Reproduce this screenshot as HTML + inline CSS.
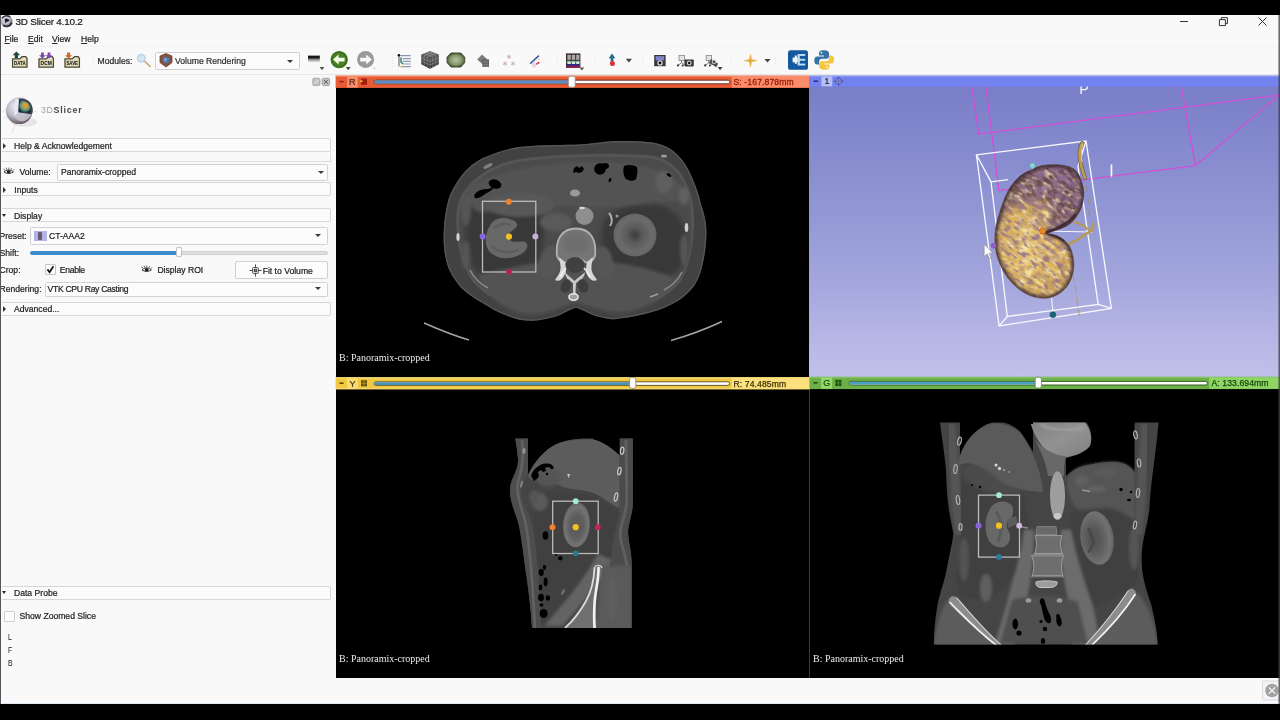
<!DOCTYPE html>
<html>
<head>
<meta charset="utf-8">
<title>3D Slicer 4.10.2</title>
<style>
*{box-sizing:border-box;margin:0;padding:0}
html,body{width:1280px;height:720px;overflow:hidden;background:#000}
body{font-family:"Liberation Sans",sans-serif;font-size:8.6px;color:#222;position:relative}
.abs{position:absolute}
.t{position:absolute;white-space:nowrap;line-height:10px;color:#161616;font-size:8.6px;filter:blur(.3px);-webkit-text-stroke:.22px #2a2a2a}
#win{position:absolute;left:0;top:14.5px;width:1280px;height:689px;background:#f9f9fa}
#edge{position:absolute;left:0;top:15px;width:1.400px;height:688.500px;background:#55565c}
.grp{position:absolute;left:2px;width:329px;height:14.400px;border:1px solid #d6d6d8;border-left:none;border-radius:0 2px 2px 0;background:#fbfbfc}
.combo{position:absolute;border:1px solid #d2d2d4;background:#fcfcfd;border-radius:1.5px}
.arr{position:absolute;width:0;height:0;border-left:3px solid transparent;border-right:3px solid transparent;border-top:3.2px solid #3a3a3a}
.arr2{position:absolute;width:0;height:0;border-left:2.6px solid transparent;border-right:2.6px solid transparent;border-top:3px solid #444}
.tri-r{position:absolute;width:0;height:0;border-top:3px solid transparent;border-bottom:3px solid transparent;border-left:3.4px solid #333;filter:blur(.3px)}
.tri-d{position:absolute;width:0;height:0;border-left:2.7px solid transparent;border-right:2.7px solid transparent;border-top:3.8px solid #262626;filter:blur(.3px)}
.view{position:absolute;background:#000;overflow:hidden}
.lbl{position:absolute;font-family:"Liberation Serif",serif;font-size:10px;color:#ececec;white-space:nowrap;line-height:11px;filter:blur(.3px)}
.sep{position:absolute;top:53px;width:3px;height:15px;background-image:radial-gradient(circle,#e2e2e6 .6px,transparent .8px);background-size:3px 3px}
svg{position:absolute;overflow:visible}
</style>
</head>
<body>
<div id="win"></div>
<div id="edge"></div>
<div class="combo" style="left:155px;top:51.500px;width:144.500px;height:18px;border-color:#cfcfd2"></div>
<!-- title bar -->
<div class="t" style="left:15.500px;top:15.200px;font-size:9.900px;line-height:13px;color:#111;letter-spacing:-.2px">3D Slicer 4.10.2</div>
<!-- window buttons -->
<svg style="left:0;top:0" width="1280" height="720" viewBox="0 0 1280 720">
  <defs>
    <filter id="b3" x="-20%" y="-20%" width="140%" height="140%"><feGaussianBlur stdDeviation="0.35"/></filter>
    <filter id="b5" x="-20%" y="-20%" width="140%" height="140%"><feGaussianBlur stdDeviation="0.5"/></filter>
    <radialGradient id="gLogo" cx="40%" cy="35%" r="75%"><stop offset="0" stop-color="#f4f4f8"/><stop offset=".5" stop-color="#b8b8ca"/><stop offset=".85" stop-color="#6e5e66"/><stop offset="1" stop-color="#3e3238"/></radialGradient>
    <radialGradient id="gCore" cx="55%" cy="40%" r="60%"><stop offset="0" stop-color="#f0a018"/><stop offset=".4" stop-color="#b0a050"/><stop offset=".7" stop-color="#4a8a80"/><stop offset="1" stop-color="#10202a"/></radialGradient>
    <radialGradient id="gGreen" cx="50%" cy="50%" r="55%"><stop offset="0" stop-color="#b4c29a"/><stop offset=".6" stop-color="#8a9a70"/><stop offset="1" stop-color="#3c4a2a"/></radialGradient>
    <linearGradient id="gCube" x1="0" y1="0" x2="0" y2="1"><stop offset="0" stop-color="#6e6e6e"/><stop offset="1" stop-color="#2c2c2e"/></linearGradient>
    <linearGradient id="gHist" x1="0" y1="0" x2="0" y2="1"><stop offset="0" stop-color="#151515"/><stop offset=".38" stop-color="#1c1c1c"/><stop offset=".5" stop-color="#777"/><stop offset="1" stop-color="#ededed"/></linearGradient>
  </defs>
  <!-- window controls -->
  <g stroke="#333" stroke-width="1" fill="none">
    <path d="M1180 21.5h8"/>
    <path d="M1219.400 19.600h6v6h-6z M1221.400 19.600v-2h6v6h-2"/>
    <path d="M1258.5 17.5l8 8 M1266.5 17.5l-8 8"/>
  </g>
  <!-- app icon in title -->
  <g filter="url(#b5)">
    <circle cx="6.700" cy="21.400" r="5.800" fill="url(#gLogo)"/>
    <path d="M4.600 18.800C6.400 18 8.600 18.800 9.600 20.600L5 23Z" fill="#1c1c22"/>
    <path d="M2 18.400C3.400 15.800 7 14.800 10.200 16.800" stroke="#2c2c34" stroke-width="1.500" fill="none"/>
    <path d="M3.200 25.200C6 27.400 10.400 26.400 11.800 22.600" stroke="#34303a" stroke-width="1.900" fill="none"/>
  </g>

  <!-- DATA / DCM / SAVE icons -->
  <g filter="url(#b3)">
    <g id="fold">
      <path d="M12.6 58.8h7.2l2.6-2.2h3.4l1.2 1.8v8.8h-14.4z" fill="#e6e0c2" stroke="#4a4632" stroke-width="1.3" stroke-linejoin="round"/>
      <rect x="13.6" y="60" width="12.4" height="5.6" fill="#d8d2ae"/>
    </g>
    <text x="14" y="65.4" font-size="5.6" font-weight="bold" fill="#111" font-family="Liberation Sans" textLength="11.6" lengthAdjust="spacingAndGlyphs">DATA</text>
    <path d="M16.4 51.6l3.8 3.6h-2.2v3h-3.2v-3h-2.2z" fill="#1e4a3c"/>
    <use href="#fold" x="26.4"/>
    <text x="40.6" y="65.4" font-size="5.6" font-weight="bold" fill="#111" font-family="Liberation Sans" textLength="11.2" lengthAdjust="spacingAndGlyphs">DCM</text>
    <path d="M42.4 58.6l-3.4-3.4h2v-2.6h2.8v2.6h2z M49 58.6l-3.4-3.4h2v-2.6h2.8v2.6h2z" fill="#7a4ab0"/>
    <use href="#fold" x="52.4"/>
    <text x="66.4" y="65.4" font-size="5.6" font-weight="bold" fill="#111" font-family="Liberation Sans" textLength="11.6" lengthAdjust="spacingAndGlyphs">SAVE</text>
    <path d="M68.6 58.6l-3.6-3.4h2.1v-2.8h3v2.8h2.1z" fill="#d8642a"/>
  </g>

  <!-- magnifier -->
  <g filter="url(#b3)">
    <path d="M144.2 60.8l6 5.6" stroke="#c8b080" stroke-width="1.8" stroke-linecap="round"/>
    <circle cx="141.3" cy="58.3" r="3.9" fill="#d4e6f4" stroke="#a8c4dc" stroke-width="1"/>
  </g>
  <!-- volume rendering icon -->
  <g filter="url(#b3)">
    <path d="M166 53.6l6 2.4v6.6l-6 4.4l-6-4.4v-6.6z" fill="#86503c" stroke="#6e4030" stroke-width=".8"/>
    <circle cx="166" cy="60" r="3.300" fill="#4a7aae"/>
    <circle cx="165.400" cy="59.400" r="1.500" fill="#7aa8d4"/>
  </g>

  <!-- history icon -->
  <rect x="308" y="55.6" width="11.8" height="6.6" fill="url(#gHist)" filter="url(#b3)"/>
  <path d="M319.6 67h4.8l-2.4 3.2z" fill="#555" filter="url(#b3)"/>
  <!-- back / forward -->
  <g filter="url(#b3)">
    <circle cx="339.2" cy="59.6" r="8.7" fill="#4c8028"/>
    <circle cx="339.2" cy="59.6" r="7.4" fill="none" stroke="#3a6a1c" stroke-width="1.2"/>
    <path d="M333 59.6l5.6-5v3.2h6v3.6h-6v3.2z" fill="#f4ffe8"/>
    <path d="M345.8 67h4.8l-2.4 3.2z" fill="#444"/>
    <circle cx="365.6" cy="59.6" r="8.5" fill="#9a9a9a"/>
    <path d="M371.8 59.6l-5.6-5v3.2h-6v3.6h6v3.2z" fill="#fafafa"/>
    <path d="M372.600 67.600h3.600l-1.800 2.200z" fill="#d4d4d4"/>
  </g>

  <!-- hierarchy icon -->
  <g filter="url(#b3)">
    <g stroke="#8a9ab0" stroke-width="1.1"><path d="M400.4 55.6h10.4 M402.6 58.6h8.2 M402.6 61.4h8.2 M404.2 64h6.6 M400.4 66.6h10.4"/></g>
    <path d="M399 56v10.4" stroke="#555" stroke-width="1"/>
    <path d="M401 57.4v4.8l2.4 2" stroke="#2a7a6a" stroke-width="1.4" fill="none"/>
    <circle cx="398.9" cy="55.2" r="1.3" fill="#111"/>
    <path d="M400 66.4h3" stroke="#e0c060" stroke-width="1"/>
  </g>
  <!-- cube -->
  <g filter="url(#b3)">
    <path d="M430 50.9l8.8 3.6v9.8l-8.8 4.5l-8.8-4.5v-9.8z" fill="url(#gCube)"/>
    <g stroke="#a8a8a8" stroke-width=".6" opacity=".8" fill="none">
      <path d="M424.2 53.4l8.8 3.7 M427.2 52.1l8.8 3.7 M432.8 52.1l-8.7 3.7 M435.8 53.4l-8.7 3.7"/>
      <path d="M421.2 57.8l8.8 3.9l8.8-3.9 M421.2 61l8.8 4l8.8-4 M424.2 56v9.6 M427.2 57.2v9.8 M432.8 57.2v9.8 M435.8 56v9.6 M430 58.4v10"/>
    </g>
  </g>
  <!-- green model blob -->
  <g filter="url(#b3)">
    <path d="M451 53h9.8l3.9 4.2v5.4l-3.9 4.4h-9.8l-3.9-4.4v-5.4z" fill="url(#gGreen)" stroke="#3e4a2c" stroke-width="1"/>
  </g>
  <!-- transforms -->
  <g filter="url(#b3)">
    <path d="M482 54.6l5.4 4.8l-4.6 5l-5.6-4.8z" fill="#7a7a7a"/>
    <rect x="482.4" y="59.4" width="6.6" height="7.4" fill="#5a5a5c"/>
    <path d="M484.6 59.6v7 M486.8 59.6v7 M482.6 62h6.2 M482.6 64.4h6.2" stroke="#999" stroke-width=".5"/>
  </g>
  <!-- fiducials (faint) -->
  <g stroke="#c4aaa2" stroke-width=".8" filter="url(#b3)" fill="none">
    <g id="ast"><path d="M509 54.600v4.400 M507 55.700l4 2.200 M511 55.700l-4 2.200"/></g>
    <use href="#ast" x="-4" y="6.800"/><use href="#ast" x="4" y="6.800"/>
  </g>
  <!-- ruler -->
  <g filter="url(#b3)">
    <path d="M530.4 63.8l8.6-8" stroke="#c8d0f0" stroke-width="2.6"/>
    <path d="M530.2 63.6l8.6-8" stroke="#2a3a8a" stroke-width="1.1"/>
    <circle cx="534" cy="65.4" r="1.5" fill="none" stroke="#e0a0b0" stroke-width=".8"/>
    <circle cx="538.4" cy="62.8" r="1.1" fill="#d03060"/>
    <circle cx="536.8" cy="63.8" r=".9" fill="#a030a0"/>
    <circle cx="539" cy="59.4" r=".8" fill="#e8d060"/>
  </g>
  <!-- layout grid -->
  <g filter="url(#b3)">
    <rect x="566" y="53.4" width="14.4" height="14.4" fill="#3a2a2a"/>
    <rect x="567.4" y="54.8" width="3.4" height="5" fill="#b0a8a8"/><rect x="571.8" y="54.8" width="3.4" height="5" fill="#b0a8a8"/><rect x="576.2" y="54.8" width="3.2" height="5" fill="#b0a8a8"/>
    <rect x="566.6" y="60.6" width="13.2" height="2.4" fill="#2a8a5a"/>
    <rect x="567.4" y="61.4" width="3.4" height="5.4" fill="#d8e8e0"/><rect x="571.8" y="61.4" width="3.4" height="5.4" fill="#d8e8e0"/><rect x="576.2" y="61.4" width="3.2" height="5.4" fill="#d8e8e0"/>
    <rect x="566.6" y="64" width="13.2" height="3.2" fill="#2a2a90"/>
    <rect x="566.6" y="65.8" width="13.2" height="1.6" fill="#a01838"/>
    <path d="M579.6 67.4h4.6l-2.3 3z" fill="#4a5a4a"/>
  </g>
  <!-- mouse mode arrow -->
  <g filter="url(#b3)">
    <path d="M612 53.6l3.4 4.6h-2v3.2h-2.8v-3.2h-2z" fill="#2a6a8c"/>
    <circle cx="612.4" cy="63.4" r="2.5" fill="#d83040"/>
    <path d="M625.8 58.8h6.2l-3.1 3.6z" fill="#444"/>
  </g>
  <!-- screenshot -->
  <g filter="url(#b3)">
    <rect x="654.2" y="55" width="11.4" height="11.2" fill="#34343c"/>
    <rect x="655.6" y="56.2" width="8.6" height="4.2" fill="#8084d0"/>
    <circle cx="660" cy="63" r="2.7" fill="#d8d8d8"/><circle cx="660" cy="63" r="1.4" fill="#111"/>
  </g>
  <!-- scene views -->
  <g filter="url(#b3)">
    <g id="sv">
      <rect x="679" y="55.4" width="5.4" height="5.2" fill="#e4e4e8" stroke="#888" stroke-width=".8"/>
      <path d="M681.6 60.6v2l-3 2.4 M681.6 62.6l3 2.4" stroke="#555" stroke-width=".8" fill="none"/>
      <circle cx="678" cy="65.4" r="1.1" fill="#333"/><circle cx="682.6" cy="65.4" r="1" fill="#333"/>
    </g>
    <rect x="684.4" y="59.4" width="9.4" height="7" rx=".8" fill="#3a3a3e"/>
    <circle cx="689.2" cy="63" r="2.4" fill="#d0d0d0"/><circle cx="689.2" cy="63" r="1.2" fill="#111"/>
    <use href="#sv" x="27.2"/>
    <path d="M711 59l7 4.4l-1.6 3.8l-7.4-4.4z" fill="#4a4a4e"/>
    <circle cx="714" cy="61.8" r="2.3" fill="#c8c8c8"/><circle cx="714" cy="61.8" r="1.1" fill="#222"/>
    <path d="M717.6 67h5l-2.5 3.2z" fill="#444"/>
  </g>
  <!-- crosshair -->
  <g filter="url(#b3)">
    <path d="M750.5 54.2l1.1 5.3l5.4 1.1l-5.4 1.1l-1.1 5.3l-1.1-5.3l-5.4-1.1l5.4-1.1z" fill="#e0a838" stroke="#e8b850" stroke-width=".6"/>
    <path d="M764.4 59h6.2l-3.1 3.4z" fill="#444"/>
  </g>
  <!-- extension manager -->
  <g filter="url(#b3)">
    <rect x="788" y="50.2" width="20" height="19.6" rx="2.6" fill="#14589e"/>
    <g fill="#bfe0f6"><rect x="799.4" y="54" width="5.8" height="1.9"/><rect x="798.4" y="58.8" width="6.8" height="1.9"/><rect x="799.4" y="63.6" width="5.8" height="1.9"/><rect x="797.6" y="54" width="2.2" height="11.5"/></g>
    <path d="M792.6 57.6h2.2v-2.2h2v2.2h1v4.6h-1v1.6h-2v-1.6h-2.2z" fill="#f2f6fa"/>
  </g>
  <!-- python -->
  <g filter="url(#b3)">
    <path d="M823.6 50.2c-4.4 0-4.6 2-4.6 3v2.4h5v.9h-6.8c-2 0-2.9 1.6-2.9 4s.9 4.1 2.9 4.100h1.900v-2.700c0-1.900 1.400-3.100 3.100-3.100h4.400c1.500 0 2.500-1 2.500-2.500v-3.100c0-1.500-1.400-3-5.500-3z" fill="#3872a4"/>
    <path d="M824.800 69.800c4.400 0 4.600-2 4.600-3v-2.400h-5v-.9h6.800c2 0 2.900-1.600 2.900-4s-.9-4.100-2.900-4.100h-1.900v2.700c0 1.900-1.400 3.100-3.100 3.100h-4.400c-1.500 0-2.500 1-2.500 2.500v3.100c0 1.500 1.400 3 5.500 3z" fill="#f6c63c"/>
    <circle cx="821.400" cy="52.700" r=".9" fill="#e8f0f8"/><circle cx="827" cy="67.300" r=".9" fill="#fff8e0"/>
  </g>

  <!-- dock buttons -->
  <g filter="url(#b3)">
    <rect x="312.800" y="78.200" width="7.200" height="7.400" rx="1.400" fill="#c4c4c6" stroke="#9c9c9e" stroke-width=".8"/>
    <path d="M314.600 83.800l3.600-3.800" stroke="#f4f4f4" stroke-width=".9"/>
    <rect x="322.200" y="78.200" width="7.400" height="7.400" rx="1.400" fill="#c0c0c2" stroke="#98989a" stroke-width=".8"/>
    <path d="M324 80l3.800 3.800 M327.800 80l-3.800 3.800" stroke="#5a5a5c" stroke-width="1"/>
  </g>

  <!-- 3DSlicer logo -->
  <g filter="url(#b5)">
    <path d="M2 112l21-15.500 M12 133l12-36 M3 118l34-7" stroke="#ddd6da" stroke-width=".8" opacity=".8"/>
    <ellipse cx="24" cy="122" rx="13" ry="5" fill="#000" opacity=".08"/>
    <circle cx="19.200" cy="110.800" r="13.300" fill="url(#gLogo)"/>
    <path d="M16 99.600c6-3 14.500 0 16.300 7.200c.8 3.400.2 6-.6 7.400l-13.400-1.600z" fill="#3a4450"/>
    <path d="M18.600 101.200c4.800-1.600 10.600.8 11.800 6.600c.5 2.400.2 4-.4 5.200l-11-1.400z" fill="url(#gCore)"/>
    <path d="M15.400 99.400c1.200-.8 3-.8 3.600 0l-1 13.400l-3.400 3.400c-.6-5-.4-12 .8-16.800z" fill="#e8e8ee"/>
    <path d="M14.600 116.200l3.400-3.400l13.600 1.800c-1.200 2.400-3.600 5-7.400 6.600c-4 .6-8-.8-9.600-5z" fill="#c8c6d0" opacity=".85"/>
  </g>
</svg>
<!-- menu -->
<div class="t" style="left:4.5px;top:33.5px"><u>F</u>ile</div>
<div class="t" style="left:28px;top:33.5px"><u>E</u>dit</div>
<div class="t" style="left:52px;top:33.5px"><u>V</u>iew</div>
<div class="t" style="left:81px;top:33.5px"><u>H</u>elp</div>
<div class="abs" style="left:0;top:45.500px;width:1280px;height:1px;background:#f2f2f4"></div>

<!-- toolbar -->
<div class="abs" style="left:0;top:73.500px;width:1280px;height:1.500px;background:#e6e6e9"></div>
<div class="sep" style="left:92px"></div>
<div class="sep" style="left:391px"></div>
<div class="sep" style="left:556px"></div>
<div class="sep" style="left:594px"></div>
<div class="sep" style="left:641px"></div>
<div class="sep" style="left:730px"></div>
<div class="sep" style="left:774px"></div>
<div class="t" style="left:97.500px;top:56px;color:#2a2a2a">Modules:</div>
<div class="t" style="left:175px;top:56px;color:#333">Volume Rendering</div>
<div class="arr" style="left:287px;top:59.500px"></div>

<!-- left panel -->
<div class="t" style="left:41px;top:104.800px;font-size:8.800px;letter-spacing:.6px;color:#a2a2a6;-webkit-text-stroke:0">3D<b style="color:#48484c;letter-spacing:.85px">Slicer</b></div>

<div class="grp" style="top:138px"></div>
<div class="tri-r" style="left:3px;top:142.800px"></div>
<div class="t" style="left:14px;top:141px">Help &amp; Acknowledgement</div>
<div class="abs" style="left:2px;top:160.500px;width:329px;height:1px;background:#dcdcde"></div>
<div class="abs" style="left:330px;top:153px;width:1px;height:8px;background:#dcdcde"></div>

<div class="t" style="left:19.500px;top:167px">Volume:</div>
<div class="combo" style="left:57px;top:164px;width:271px;height:17px"></div>
<div class="t" style="left:61px;top:167.200px">Panoramix-cropped</div>
<div class="arr" style="left:318px;top:170.500px"></div>

<div class="grp" style="top:182px"></div>
<div class="tri-r" style="left:3px;top:186.800px"></div>
<div class="t" style="left:14.300px;top:185.200px">Inputs</div>

<div class="grp" style="top:208px"></div>
<div class="tri-d" style="left:1.800px;top:214px"></div>
<div class="t" style="left:14px;top:211.200px">Display</div>

<div class="t" style="left:-.500px;top:231px">Preset:</div>
<div class="combo" style="left:29.500px;top:226.500px;width:298.500px;height:18px"></div>
<div class="abs" style="left:33.500px;top:230.500px;width:13px;height:10px;background:#b4b4e4"></div>
<div class="abs" style="left:38px;top:231.500px;width:4px;height:8.500px;background:#6a5a70;border-radius:1px;filter:blur(.4px)"></div>
<div class="t" style="left:49px;top:231px">CT-AAA2</div>
<div class="arr" style="left:315.400px;top:233.500px"></div>

<div class="t" style="left:-.500px;top:248px">Shift:</div>
<div class="abs" style="left:30px;top:250.500px;width:297.500px;height:4.600px;border-radius:2.300px;background:#dedee0;border:.6px solid #cfcfd2"></div>
<div class="abs" style="left:30px;top:250.500px;width:148px;height:4.600px;border-radius:2.300px;background:#3d8ccb"></div>
<div class="abs" style="left:175.800px;top:246.800px;width:6.400px;height:10.600px;border-radius:2px;background:#fdfdfd;border:.8px solid #c4c4c8;box-shadow:0 0 1px rgba(0,0,0,.15)"></div>

<div class="t" style="left:-.500px;top:265.200px">Crop:</div>
<div class="abs" style="left:44.500px;top:263.800px;width:11px;height:10.800px;background:#fdfdfd;border:.8px solid #c6c6ca;border-radius:1px"></div>
<svg style="left:44.500px;top:263.800px" width="11" height="11" viewBox="0 0 11 11"><path d="M2.400 5.400l2.200 2.800l3.800-6" stroke="#111" stroke-width="1.700" fill="none"/></svg>
<div class="t" style="left:59.800px;top:265.200px;letter-spacing:-.3px">Enable</div>
<div class="t" style="left:157.400px;top:265.200px">Display ROI</div>
<div class="combo" style="left:235px;top:261px;width:93px;height:17.500px;border-radius:2px;border-color:#d0d0d2"></div>
<div class="t" style="left:262.700px;top:265.600px">Fit to Volume</div>
<svg style="left:249px;top:263.500px" width="13" height="13" viewBox="0 0 13 13"><g stroke="#3a3a3a" stroke-width=".9" fill="none" filter="url(#b3)"><rect x="3.600" y="3.600" width="5.800" height="5.800" rx=".8"/><rect x="5.300" y="5.300" width="2.400" height="2.400" fill="#888"/><path d="M6.500 .4v3.200 M6.500 9.400v3.200 M.4 6.500h3.200 M9.400 6.500h3.200"/></g></svg>

<div class="t" style="left:-.500px;top:284.200px">Rendering:</div>
<div class="combo" style="left:44.500px;top:281.500px;width:283.500px;height:15.500px"></div>
<div class="t" style="left:47.500px;top:284.200px;letter-spacing:-.3px">VTK CPU Ray Casting</div>
<div class="arr" style="left:315.400px;top:287.200px"></div>

<div class="grp" style="top:301.500px"></div>
<div class="tri-r" style="left:3px;top:306.200px"></div>
<div class="t" style="left:14px;top:304.400px">Advanced...</div>

<!-- eye icons -->
<svg style="left:0;top:0" width="340" height="300" viewBox="0 0 340 300">
  <g id="eye" filter="url(#b3)">
    <path d="M4 172c1.600-2.600 7.600-2.800 9.400 0c-1.800 1.600-7.600 1.800-9.400 0z" fill="#fff" stroke="#222" stroke-width=".9"/>
    <circle cx="8.700" cy="171.800" r="1.900" fill="#222"/>
    <path d="M4.600 170.200l-.8-1.400 M6.600 169.400l-.4-1.600 M8.800 169.200v-1.600 M11 169.600l.6-1.400 M12.800 170.600l1-1.200" stroke="#222" stroke-width=".7"/>
  </g>
  <use href="#eye" x="138" y="98"/>
</svg>

<!-- data probe -->
<div class="grp" style="top:585.500px"></div>
<div class="tri-d" style="left:1.800px;top:590.600px"></div>
<div class="t" style="left:14px;top:588.400px">Data Probe</div>
<div class="abs" style="left:4px;top:610.500px;width:11px;height:11px;background:#fdfdfd;border:.8px solid #cdcdd0;border-radius:1px"></div>
<div class="t" style="left:19.500px;top:611.400px">Show Zoomed Slice</div>
<div class="t" style="left:8px;top:632.400px;font-size:8.800px;transform:scaleX(.78);transform-origin:0 0;-webkit-text-stroke:0">L</div>
<div class="t" style="left:8px;top:645px;font-size:8.800px;transform:scaleX(.78);transform-origin:0 0;-webkit-text-stroke:0">F</div>
<div class="t" style="left:8px;top:657.600px;font-size:8.800px;transform:scaleX(.78);transform-origin:0 0;-webkit-text-stroke:0">B</div>

<!-- status bar close -->
<svg style="left:0;top:0" width="1280" height="720" viewBox="0 0 1280 720">
  <rect x="1262.500" y="681" width="20" height="19" rx="1.500" fill="#f4f4f5" stroke="#d0d0d2" stroke-width=".8"/>
  <circle cx="1272" cy="690.500" r="6.800" fill="#a2a2a4"/>
  <path d="M1268.800 687.300l6.400 6.400 M1275.200 687.300l-6.400 6.400" stroke="#fff" stroke-width="1.100"/>
</svg>
<!-- ===== VIEWS ===== -->
<div class="view" style="left:335.600px;top:75.600px;width:473.400px;height:301px"></div>
<div class="view" style="left:335.600px;top:376.600px;width:474px;height:301.600px"></div>
<div class="view" style="left:809.600px;top:376.600px;width:471px;height:301.600px"></div>
<div class="view" style="left:809px;top:75.600px;width:471.600px;height:301px;background:linear-gradient(#787cc6 0%,#8488cd 22%,#9297d4 45%,#a5a8de 70%,#b4b5e4 85%,#c0c0ea 100%)"></div>
<div class="abs" style="left:809.200px;top:389px;width:1px;height:289px;background:#3a3a3a"></div>

<!-- slice bars -->
<svg style="left:0;top:0" width="1280" height="720" viewBox="0 0 1280 720">
  <g filter="url(#b3)">
  <!-- red -->
  <rect x="335.600" y="75.600" width="473.400" height="12.300" fill="#e85c34"/>
  <rect x="335.600" y="75.600" width="473.400" height="1.200" fill="#f4a080" opacity=".7"/>
  <rect x="347" y="76" width="10.800" height="11.600" fill="#f68e6c"/>
  <rect x="731.800" y="76" width="77.200" height="11.600" fill="#f98c6a"/>
  <path d="M339.400 81.600h4.200" stroke="#8a2410" stroke-width="1.500"/>
  <rect x="361" y="78.600" width="6" height="6.200" fill="#a41c0a"/><rect x="360.200" y="80.400" width="2.400" height="1.600" fill="#d8d030"/>
  <rect x="374" y="80.200" width="356" height="3.600" rx="1.800" fill="#fdfdfd" stroke="#5a2a1c" stroke-width=".9"/>
  <rect x="374.400" y="80.600" width="196" height="2.800" rx="1.400" fill="#5c8cc8"/>
  <rect x="568.400" y="76.200" width="6.800" height="11" rx="1.800" fill="#fdfdfd" stroke="#9a8a84" stroke-width=".8"/>
  <!-- 3D -->
  <rect x="809" y="75.600" width="471.600" height="11" fill="#7282ee"/>
  <rect x="809" y="75.600" width="471.600" height="1.600" fill="#8c98f0" opacity=".8"/>
  <rect x="821.400" y="76.400" width="10.900" height="10" fill="#b6bef6"/>
  <path d="M813.600 81.200h4.400" stroke="#2a2a78" stroke-width="1.500"/>
  <path d="M838.600 77.400l3.800 3.800l-3.800 3.800l-3.800-3.800z" fill="#8c98e0" stroke="#4a4a98" stroke-width=".9"/>
  <path d="M838.600 76.400v9.600 M833.800 81.200h9.600" stroke="#4a4a98" stroke-width=".6"/>
  <!-- yellow -->
  <rect x="335.600" y="377.200" width="474" height="12.100" fill="#f0c842"/>
  <rect x="335.600" y="377.200" width="474" height="1.400" fill="#f8e08a" opacity=".8"/>
  <rect x="335.600" y="387.800" width="474" height="1.500" fill="#f4d874" opacity=".8"/>
  <rect x="347" y="377.600" width="11" height="11.400" fill="#f8dc72"/>
  <rect x="731.800" y="377.600" width="77.800" height="11.400" fill="#fbe07c"/>
  <path d="M339.400 383.200h4.200" stroke="#5a4608" stroke-width="1.500"/>
  <rect x="361" y="380.200" width="6" height="6.200" fill="#6a5410"/><path d="M361 383.300h6 M364 380.200v6" stroke="#c8a838" stroke-width=".6"/>
  <rect x="374" y="381.800" width="355.600" height="3.600" rx="1.800" fill="#fdfdfd" stroke="#5a4c14" stroke-width=".9"/>
  <rect x="374.400" y="382.200" width="258" height="2.800" rx="1.400" fill="#4a92ba"/>
  <rect x="629.600" y="377.600" width="6.200" height="10.800" rx="1.800" fill="#fdfdfd" stroke="#8a8460" stroke-width=".8"/>
  <!-- green -->
  <rect x="809.900" y="376.800" width="470.500" height="12.300" fill="#6cb046"/>
  <rect x="809.900" y="376.800" width="470.500" height="1.400" fill="#8cc46c" opacity=".8"/>
  <rect x="821.200" y="377.400" width="10.900" height="11.400" fill="#92d96a"/>
  <rect x="1209.400" y="377.400" width="71" height="11.400" fill="#8ed566"/>
  <path d="M813.400 382.800h4.200" stroke="#1e4a10" stroke-width="1.500"/>
  <rect x="835.400" y="379.800" width="6" height="6.200" fill="#1e5010"/><path d="M835.400 382.900h6 M838.400 379.800v6" stroke="#6ab048" stroke-width=".6"/>
  <rect x="849" y="381.400" width="358.400" height="3.600" rx="1.800" fill="#fdfdfd" stroke="#2a5418" stroke-width=".9"/>
  <rect x="849.400" y="381.800" width="189" height="2.800" rx="1.400" fill="#48a0c2"/>
  <rect x="1035.200" y="377.200" width="6.200" height="10.800" rx="1.800" fill="#fdfdfd" stroke="#6a8460" stroke-width=".8"/>
  </g>
</svg>
<div class="t" style="left:349px;top:77.200px;color:#7a1e0c;font-size:9px">R</div>
<div class="t" style="left:733.500px;top:77.400px;color:#9c1c08;font-size:8.600px;letter-spacing:.12px;-webkit-text-stroke:.3px #9c1c08">S: -167.878mm</div>
<div class="t" style="left:824.400px;top:76.400px;color:#1c1c50;font-size:8.800px">1</div>
<div class="t" style="left:349.400px;top:378.600px;color:#4a3c08;font-size:9px">Y</div>
<div class="t" style="left:733.500px;top:378.800px;color:#3c3408;font-size:8.600px;letter-spacing:.1px;-webkit-text-stroke:.25px #3c3408">R: 74.485mm</div>
<div class="t" style="left:823.200px;top:378.200px;color:#1a5a0c;font-size:9px">G</div>
<div class="t" style="left:1211.500px;top:378.400px;color:#164a0c;font-size:8.600px;letter-spacing:.1px;-webkit-text-stroke:.25px #164a0c">A: 133.694mm</div>

<div class="lbl" style="left:339px;top:351.500px">B: Panoramix-cropped</div>
<div class="lbl" style="left:339px;top:653.300px">B: Panoramix-cropped</div>
<div class="lbl" style="left:813px;top:653.300px">B: Panoramix-cropped</div>
<!-- ===== AXIAL (red) CT ===== -->
<svg style="left:0;top:0" width="1280" height="720" viewBox="0 0 1280 720">
  <defs>
    <filter id="c1" x="-5%" y="-5%" width="110%" height="110%"><feGaussianBlur stdDeviation="0.7"/></filter>
    <filter id="c2" x="-10%" y="-10%" width="120%" height="120%"><feGaussianBlur stdDeviation="1.6"/></filter>
    <filter id="c3" x="-20%" y="-20%" width="140%" height="140%"><feGaussianBlur stdDeviation="3"/></filter>
    <clipPath id="clipR"><rect x="335.600" y="88" width="474" height="288.600"/></clipPath>
    <clipPath id="axBody"><path id="axP" d="M519 147C535 145.200 555 145 576 144.750C595 143.500 607 141 620 141C635 141 645 141.500 652.600 142.600C659 144 664 145.500 669 148C676 152.500 681 158 685.400 164.400C690 172 693.500 180 696.400 188.500C698.500 194 700 199 700.700 203.800C704 213 706.400 222 706.400 230.700C706.400 239 705.800 247 704.600 254.200C703.500 261 702 267 700.600 272.300C698.500 278 696.500 282.500 693.400 286.700C689 292.500 684 297 677.200 301.200C669 306 661 309.500 651.900 312C642 315 632 317 621.200 318.300C618 319 615 319.300 612 319.200C606 318.800 600 317.500 594 315.600C588 313 582 309.500 576 307.500C570 309.500 564 313 558.800 315.600C550 318.500 541 320.500 531.700 320.700C524 320.600 518 319.500 511.900 317.400C503 314.500 495 311 488.400 306.600C480 301.500 474 298 468.500 294C463 290 459 286 455.900 281C451 274.500 448.500 269 446.800 263C444.500 254 443.400 245 443.600 236C443.800 223 445.500 211 448.300 200C450.500 193 454 186.500 458.400 180C465 170 473 163 483 158C495 152.500 507 149 519 147Z"/></clipPath>
    <radialGradient id="kid" cx="50%" cy="50%" r="50%"><stop offset="0" stop-color="#3c3c3c"/><stop offset=".35" stop-color="#5a5a5a"/><stop offset=".8" stop-color="#6c6c6c"/><stop offset="1" stop-color="#646464"/></radialGradient>
  </defs>
  <g clip-path="url(#clipR)">
   <g filter="url(#c1)">
    <use href="#axP" fill="#434343"/>
    <g clip-path="url(#axBody)">
      <!-- outer rim lighter -->
      <use href="#axP" fill="none" stroke="#565656" stroke-width="2.400"/>
      <!-- muscle wall ring -->
      <path d="M512 162C540 156 610 153 652 157C676 161 688 182 692 208C694 236 690 262 680 280C666 298 642 307 620 305C600 303 590 297 577 296C562 297 552 305 532 306C512 307 488 297 474 281C462 264 456 238 458 212C460 188 486 168 512 162Z" fill="#4c4c4c" stroke="#545454" stroke-width="3"/>
      <g filter="url(#c3)" fill="#383838">
        <path d="M466 215C470 198 486 192 505 196C525 198 540 204 544 222C546 240 542 262 530 276C515 286 490 284 476 272C466 258 463 235 466 215Z"/>
        <path d="M604 222C612 206 640 200 664 206C684 214 690 236 686 256C680 276 660 288 640 286C620 284 606 268 602 250C600 240 600 230 604 222Z"/>
        <ellipse cx="575" cy="180" rx="60" ry="7"/>
      </g>
      <!-- posterior muscles -->
      <g filter="url(#c2)">
        <path d="M478 275C500 270 530 262 555 262L600 262C625 262 655 270 675 278C665 300 640 312 620 312C600 312 590 305 577 303C562 305 552 314 532 314C512 314 490 302 478 275Z" fill="#535353"/>
        <!-- psoas -->
        <ellipse cx="549" cy="262" rx="9" ry="16" fill="#575757" transform="rotate(12 549 262)"/>
        <ellipse cx="604" cy="262" rx="9" ry="16" fill="#575757" transform="rotate(-12 604 262)"/>
        <!-- anterior bowel / organs -->
        <path d="M470 185C500 170 560 160 610 162C650 164 680 175 686 195C680 205 660 200 640 204C610 210 590 206 560 206C530 206 500 214 478 212C468 205 466 195 470 185Z" fill="#525252"/>
        <ellipse cx="520" cy="205" rx="34" ry="12" fill="#595959"/>
        <ellipse cx="556" cy="222" rx="16" ry="9" fill="#5a5a5a"/>
        <ellipse cx="664" cy="182" rx="9" ry="11" fill="#5e5e5e"/>
        <ellipse cx="684" cy="196" rx="5" ry="9" fill="#606060"/>
        <ellipse cx="466" cy="210" rx="5" ry="16" fill="#545454"/>
        <ellipse cx="684" cy="250" rx="4" ry="16" fill="#545454"/>
        <ellipse cx="466" cy="255" rx="4" ry="14" fill="#545454"/>
      </g>
      <!-- kidneys -->
      <circle cx="635" cy="235" r="21.500" fill="url(#kid)"/>
      <path d="M490.200 225.300C493 220.500 498 218 502.800 218.100C508 218 513 219.500 515.500 221.700C517.500 223.500 517.500 225.500 516.400 227.100C514 230 510 232 508.300 234.300C508 237 509.500 240 511.900 241.500C516 242.500 520.500 241 524.500 241.500C527 243 527.800 245 527.200 247C526 250.500 523.500 252.800 520.900 254.200C516 257 510 258.400 504.600 258.200C499 257.800 494 255.500 490.200 252.400C487 249 485.600 244.500 485.700 239.700C485.800 234.500 487.500 229.500 490.200 225.300Z" fill="#686868"/>
      <path d="M494 228C498 224 506 223 511 225 M492 246C497 252 508 254 518 250" stroke="#5c5c5c" stroke-width="2.400" fill="none" filter="url(#c1)"/>
      <!-- aorta & vessels -->
      <circle cx="584.500" cy="216" r="9" fill="#8e8e8e"/>
      <ellipse cx="582" cy="208" rx="3" ry="1.200" fill="#d8d8d8"/>
      <ellipse cx="575" cy="193" rx="5" ry="3.600" fill="#9a9a9a"/>
      <path d="M609 213c3 3 4 9 1 13" stroke="#b0b0b0" stroke-width="2" fill="none"/>
      <circle cx="617" cy="216" r="1.500" fill="#999"/>
      <!-- vertebra -->
      <path d="M557 256C555 238 563 228.500 576 228.500C589 228.500 597 238 595 256C593 262 589 264 585 262C580 257 572 257 567 262C563 264 559 262 557 256Z" fill="#747474" stroke="#b2b2b2" stroke-width="1.800"/>
      <ellipse cx="576" cy="243" rx="13" ry="10" fill="#6e6e6e" filter="url(#c2)"/>
      <ellipse cx="575" cy="265" rx="9.500" ry="8" fill="#404040"/>
      <path d="M559 257C560 264 562 268 559 274L555 280C558 282 562 280 564 276C567 272 566 268 565 262Z" fill="#d6d6d6"/>
      <path d="M593 257C592 264 590 268 593 274L597 280C594 282 590 280 588 276C585 272 586 268 587 262Z" fill="#d6d6d6"/>
      <path d="M565 272C568 276 572 278 574.500 281C577 278 581 276 585 272C584 279 580 281 576 283L575.500 294L573 294L573 283C569 281 566 279 565 272Z" fill="#c8c8c8"/>
      <path d="M566 268c-3 3-4 6-6 9 M584 268c3 3 4 6 6 9" stroke="#f2f2f2" stroke-width="1.600" fill="none"/>
      <ellipse cx="573.500" cy="297" rx="4.600" ry="3.200" fill="#a0a0a0" stroke="#ececec" stroke-width="1.500"/>
      <ellipse cx="566" cy="286" rx="5" ry="7" fill="#3c3c3c" filter="url(#c1)" transform="rotate(20 566 286)"/>
      <ellipse cx="583" cy="286" rx="5" ry="7" fill="#3c3c3c" filter="url(#c1)" transform="rotate(-20 583 286)"/>
      <!-- ribs -->
      <ellipse cx="458" cy="237" rx="1.600" ry="4" fill="#d4d4d4"/>
      <ellipse cx="686.500" cy="227.500" rx="1.800" ry="4.500" fill="#cfcfcf"/>
      <ellipse cx="664" cy="156" rx="3" ry="1.600" fill="#9a9a9a"/>
      <ellipse cx="488" cy="166" rx="5" ry="1.600" fill="#808080" transform="rotate(-28 488 166)"/>
      <path d="M470 270c4 8 10 14 18 18" stroke="#8a8a8a" stroke-width="1.600" fill="none"/>
      <path d="M682 272c-4 8-10 14-18 18" stroke="#8a8a8a" stroke-width="1.600" fill="none"/>
      <path d="M650 297l8-3" stroke="#a0a0a0" stroke-width="1.600"/>
      <!-- gas -->
      <g fill="#000">
        <ellipse cx="495" cy="184" rx="6.500" ry="4.500" transform="rotate(20 495 184)"/>
        <path d="M475 194c3-4 8-5 13-5l6-2c-2 4-6 5-9 7c-3 2-6 5-10 4c-1-1-1-3 0-4z"/>
        <circle cx="600" cy="169" r="5.800"/><ellipse cx="605" cy="166" rx="4" ry="3"/>
        <path d="M624 166c4-2 10-1 13 1c1 4 0 9-1 12c-3 3-8 2-11-1c-2-4-2-8-1-12z"/>
        <path d="M574 168l3-2l2 2l3-2l2 3l-2 3l-3 1l-3-1l-3 1z"/>
        <ellipse cx="669" cy="175" rx="2.600" ry="1.400" transform="rotate(30 669 175)"/>
        <ellipse cx="610" cy="180" rx="1.300" ry="2.200" transform="rotate(25 610 180)"/>
      </g>
    </g>
    <!-- table lines -->
    <path d="M424 323C440 330 455 336 469 340" stroke="#a4a4a4" stroke-width="1.500" fill="none"/>
    <path d="M671 340.500C690 335 706 329 722 321.500" stroke="#a4a4a4" stroke-width="1.500" fill="none"/>
   </g>
   <!-- ROI -->
   <g filter="url(#b3)">
    <rect x="482.500" y="201.300" width="53.300" height="70.700" fill="none" stroke="#bebebe" stroke-width="1.250"/>
    <circle cx="508.800" cy="201.800" r="3" fill="#f08030"/>
    <circle cx="482.600" cy="236.600" r="3" fill="#8866dd"/>
    <circle cx="535.400" cy="236.600" r="3" fill="#c4b0dc"/>
    <circle cx="509" cy="236.600" r="3.100" fill="#f4c020"/>
    <circle cx="509" cy="271.800" r="2.900" fill="#b42848"/>
   </g>
  </g>
</svg>
<!-- ===== SAGITTAL (yellow) CT ===== -->
<svg style="left:0;top:0" width="1280" height="720" viewBox="0 0 1280 720">
  <defs>
    <clipPath id="sgBody"><path id="sgP" d="M515.300 438.600L632.800 438.600L632.800 505C632 515 628.500 524 628 532C628.500 542 631 550 631.600 560L631.600 628L532 628C531 610 528 585 525.500 570C523 550 521 535 518 522C513 508 509 498 510 488C511 478 517 472 518 462C518 452 516 445 515.300 438.600Z"/></clipPath>
    <radialGradient id="kid2" cx="50%" cy="52%" r="50%"><stop offset="0" stop-color="#585858"/><stop offset=".5" stop-color="#5e5e5e"/><stop offset=".85" stop-color="#737373"/><stop offset="1" stop-color="#686868"/></radialGradient>
  </defs>
  <g filter="url(#c1)">
    <use href="#sgP" fill="#444"/>
    <g clip-path="url(#sgBody)">
      <!-- lung (black) under dome -->
      <path d="M528 436L528 474C534 462 544 450 556 444C566 440 574 439 580 438.600L580 436Z" fill="#000"/>
      <path d="M593 436L619.500 436L619.500 455C612 448 604 442 593 439Z" fill="#000"/>
      <!-- liver -->
      <path d="M528 476C534 462 544 450 556 444C566 440 576 439.200 593 439.200C604 442 612 448 619.500 455L620 508C612 506 604 498 596 494C586 490 576 490 566 488C556 484 548 480 540 480C534 480 530 480 528 476Z" fill="#5b5b5b"/>
      <!-- anterior wall -->
      <path d="M515 438L528 438L528 470C527 478 522 484 521 492C522 502 528 512 532 524C536 540 537 560 539 580C540 600 541 615 542 628L530 628C528 600 524 560 519 525C514 508 509 498 510 488C511 478 517 472 518 462Z" fill="#4e4e4e"/>
      <path d="M522 440C524 455 522 470 518 482C516 492 520 505 525 520C530 545 533 590 535 628" stroke="#626262" stroke-width="2.500" fill="none" filter="url(#c1)"/>
      <!-- back wall -->
      <path d="M619.500 438L633 438L633 628L612 628C614 600 616 580 612 560C610 545 616 530 619 515C620 500 619.500 470 619.500 438Z" fill="#4c4c4c"/>
      <path d="M626 440L627 500C626 515 620 525 620 535C621 548 627 555 627 570L627 628" stroke="#5e5e5e" stroke-width="3" fill="none" filter="url(#c1)"/>
      <!-- lower abdomen darker -->
      <g filter="url(#c2)">
        <path d="M535 495C550 490 570 492 590 496C600 500 612 508 619 512C616 530 610 545 611 560L600 566C585 580 570 600 556 622L542 624C540 590 538 550 533 520Z" fill="#404040"/>
        <!-- bowel upper-left -->
        <ellipse cx="548" cy="478" rx="12" ry="9" fill="#545454"/>
        <ellipse cx="540" cy="502" rx="8" ry="9" fill="#5a5a5a"/>
        <ellipse cx="534" cy="497" rx="5" ry="7" fill="#555"/>
        <!-- psoas band -->
        <path d="M598 554L612 560C600 582 580 607 562 626L544 626C564 604 584 580 598 554Z" fill="#646464"/>
        <path d="M600 566L632 566L632 630L596 630Z" fill="#5a5a5a"/>
        <ellipse cx="612" cy="598" rx="5" ry="22" fill="#5e5e5e"/>
      </g>
      <!-- kidney -->
      <ellipse cx="576.500" cy="525" rx="13.400" ry="22.400" fill="url(#kid2)" transform="rotate(4 576.500 525)"/>
      <!-- iliac bone -->
      <path d="M594 568C596 564.500 601 564.500 602 568C602 576 598 584 597 594C596 606 596 618 597 628L566 628C574 620 582 610 587 600C591 590 593 578 594 568Z" fill="#707070"/>
      <path d="M598.500 567C599 578 595.500 590 594.600 602C594 612 594 620 594.500 628" stroke="#f2f2f2" stroke-width="2.600" fill="none"/>
      <path d="M594.500 568C594 580 591 592 586 601C581 610 574 620 565 628" stroke="#dcdcdc" stroke-width="1.800" fill="none"/>
      <path d="M594 568C596 564.500 601 564.500 602 568" stroke="#d0d0d0" stroke-width="1.300" fill="none"/>
      <!-- ribs in back wall -->
      <g fill="none" stroke="#c4c4c4" stroke-width="1.300">
        <ellipse cx="622.200" cy="450.600" rx="1.700" ry="3.600" transform="rotate(8 622 450)"/>
        <ellipse cx="619.400" cy="471" rx="1.600" ry="3.800" transform="rotate(10 619 471)"/>
        <ellipse cx="616" cy="497" rx="1.500" ry="4.200" transform="rotate(12 616 497)"/>
      </g>
      <ellipse cx="524" cy="451" rx="1.600" ry="3" fill="#909090"/>
      <ellipse cx="521.500" cy="484" rx="1" ry="3.600" fill="#8a8a8a" transform="rotate(14 521 484)"/>
      <path d="M567.200 474l1.400 4.200l1.400-4.200z" fill="#c8c8c8"/>
      <ellipse cx="563" cy="592" rx="1.400" ry="3.200" fill="#6c6c6c" transform="rotate(30 563 592)"/>
      <!-- gas -->
      <g fill="#000">
        <path d="M531 476c1-4 4-8 8-10c4-3 9-3 13-1l2 3l-3 1l-2-2l-4 1l1 3l-3 1l-2-2l-3 2l1 4l-2 3l-3 2z"/>
        <circle cx="547" cy="474" r="1.200"/><circle cx="552" cy="468" r="1.300"/>
        <ellipse cx="545.500" cy="535.500" rx="2.800" ry="4.200"/>
        <circle cx="560.300" cy="558.300" r="2.200"/><circle cx="556" cy="554.500" r="1.300"/>
        <ellipse cx="541.300" cy="572.500" rx="2.600" ry="3.400"/><ellipse cx="544.500" cy="567.500" rx="1.600" ry="2.400"/>
        <ellipse cx="545.600" cy="582" rx="2" ry="4.400"/><ellipse cx="540.500" cy="587.500" rx="1.800" ry="3"/>
        <ellipse cx="541" cy="597.500" rx="3" ry="3.800"/><ellipse cx="547.800" cy="598" rx="2.200" ry="2.800"/>
        <ellipse cx="541.500" cy="605" rx="2" ry="1.800"/>
        <ellipse cx="543.600" cy="613.500" rx="4" ry="4.600"/>
      </g>
    </g>
    <path d="M528 436L528 474C534 462 544 450 556 444C566 440 574 439 580 438.600L580 436Z" fill="#000"/>
    <path d="M593 436L619.500 436L619.500 455C612 448 604 442 593 439Z" fill="#000"/>
  </g>
  <g filter="url(#b3)">
    <rect x="552.700" y="501.200" width="45.500" height="52.300" fill="none" stroke="#bebebe" stroke-width="1.250"/>
    <circle cx="575.700" cy="501.200" r="2.900" fill="#a4e8dc"/>
    <circle cx="552.500" cy="527.200" r="3" fill="#f08030"/>
    <circle cx="575.700" cy="527.200" r="3.100" fill="#f4c020"/>
    <circle cx="597.800" cy="527.200" r="2.900" fill="#c42850"/>
    <circle cx="575.700" cy="553.300" r="2.900" fill="#2a7a9a"/>
  </g>
</svg>
<!-- ===== CORONAL (green) CT ===== -->
<svg style="left:0;top:0" width="1280" height="720" viewBox="0 0 1280 720">
  <defs>
    <clipPath id="topStrip"><rect x="930" y="418" width="240" height="6"/></clipPath>
    <clipPath id="crBody"><path id="crP" d="M940 422.600L1158.600 422.600C1157 440 1155 456 1153 471C1151 486 1150 498 1149.400 509C1148 520 1146 528 1144.700 534C1142 545 1141 556 1142 567.500C1143 580 1147 592 1151.300 605C1155 620 1157 632 1157.800 644.600L933.800 644.600C934 632 935 618 937.500 605C940 592 945 580 947 567.500C949 556 952 545 953.400 534C952 525 950 517 948.800 509C947 496 946.500 484 946 471C945 456 942 440 940 422.600Z"/></clipPath>
    <radialGradient id="kid3" cx="40%" cy="50%" r="55%"><stop offset="0" stop-color="#505050"/><stop offset=".45" stop-color="#5c5c5c"/><stop offset=".9" stop-color="#727272"/><stop offset="1" stop-color="#686868"/></radialGradient>
    <linearGradient id="heartG" x1="0" y1="0" x2="1" y2="1"><stop offset="0" stop-color="#7e7e7e"/><stop offset=".5" stop-color="#929292"/><stop offset="1" stop-color="#808080"/></linearGradient>
  </defs>
  <g filter="url(#c1)">
    <use href="#crP" fill="#454545"/>
    <g clip-path="url(#crBody)">
      <!-- lungs (black) -->
      <path d="M960 421L960 460C964 446 970 436 978 430C984 425 990 422.500 996 421Z" fill="#000"/>
      <path d="M1000 421C1010 424 1018 428 1022 434C1026 440 1030 446 1033 452L1033 421Z" fill="#000"/>
      <path d="M1086 421C1092 430 1093 440 1088 448C1082 454 1074 456 1066 458L1066 476C1072 470 1080 466 1090 464.500C1100 462.500 1110 461 1118 462C1126 463 1131 467 1134.500 472L1134.500 421Z" fill="#000"/>
      <!-- liver -->
      <path d="M958 462C962 446 970 436 978 430C986 424.500 992 423 998 423.400C1008 425 1016 428 1021 434C1027 442 1032 452 1036 462C1040 472 1042 482 1043 492C1034 492 1024 490 1014 488C1000 486 990 476 980 468C972 462 964 462 958 466Z" fill="#5a5a5a"/>
      <path d="M962 470C972 462 984 466 994 476C1002 484 1012 488 1022 490C1010 496 996 496 984 490C974 486 966 480 962 470Z" fill="#4c4c4c" filter="url(#c2)"/>
      <!-- heart -->
      <path d="M1030 421L1084 421C1090 428 1093 438 1090 446C1084 453 1074 456 1062 458C1056 456 1048 452 1042 446C1036 438 1032 430 1030 421Z" fill="url(#heartG)"/>
      <path d="M1040 424C1050 430 1066 432 1084 428" stroke="#a0a0a0" stroke-width="3" fill="none" filter="url(#c2)"/>
      <path d="M1035 440C1040 450 1046 462 1048 476L1064 476C1064 468 1064 462 1066 456C1056 456 1044 450 1035 440Z" fill="#686868"/>
      <!-- left abdomen organs -->
      <g filter="url(#c2)">
        <path d="M1067 478C1072 470 1080 466 1090 464.500C1100 462.500 1110 461.500 1118 462.500C1126 463.500 1131 467 1134.500 472L1136 520C1128 516 1120 510 1110 508C1098 506 1086 512 1076 508C1070 500 1066 490 1067 478Z" fill="#555"/>
        <ellipse cx="1082" cy="481" rx="7" ry="6" fill="#5e5e5e"/>
        <ellipse cx="1106" cy="473" rx="12" ry="5" fill="#5a5a5a"/>
        <ellipse cx="1096" cy="489" rx="10" ry="3" fill="#646464"/>
        <!-- visceral fat darker middle -->
        <path d="M958 476C966 484 980 492 996 494L1024 494L1030 530L1026 560C1016 580 1000 590 988 600L960 596C954 580 958 560 960 540C958 520 954 500 958 476Z" fill="#3f3f3f"/>
        <path d="M1072 512C1086 514 1100 508 1112 510C1124 514 1132 520 1138 524L1138 580C1130 590 1120 596 1108 600L1090 610C1082 590 1074 560 1070 540Z" fill="#3f3f3f"/>
        <!-- psoas -->
        <path d="M1024 530L1034 530C1034 556 1031 585 1026 602C1022 616 1018 630 1014 646L994 646C1000 626 1006 608 1010 590C1016 570 1022 552 1024 530Z" fill="#6a6a6a"/>
        <path d="M1061 530L1071 530C1076 556 1084 580 1090 598C1096 614 1098 630 1098 646L1072 646C1074 626 1070 606 1066 590C1062 570 1060 552 1061 530Z" fill="#6c6c6c"/>
        <!-- pelvis contents -->
        <path d="M1012 600C1030 594 1060 594 1078 602L1088 644L1000 644Z" fill="#505050"/>
        <!-- colon blobs -->
        <ellipse cx="986" cy="588" rx="6" ry="14" fill="#5e5e5e"/>
        <ellipse cx="964" cy="560" rx="5" ry="22" fill="#525252"/>
        <ellipse cx="1134" cy="548" rx="5" ry="22" fill="#545454"/>
        <!-- lateral muscles lower -->
        <path d="M934 646C936 625 941 608 949 598L1000 646Z" fill="#5c5c5c"/>
        <path d="M1158 646C1156 625 1149 606 1137 592L1086 646Z" fill="#5c5c5c"/>
      </g>
      <!-- walls lighter -->
      <path d="M950 424C952 450 956 476 956 500C957 515 960 525 960 535" stroke="#545454" stroke-width="10" fill="none" filter="url(#c2)"/>
      <path d="M1146 424C1144 450 1142 476 1141 500C1140 515 1138 525 1137 535" stroke="#545454" stroke-width="10" fill="none" filter="url(#c2)"/>
      <!-- kidneys -->
      <path d="M992 506C998 500 1008 500 1012 506C1015 512 1012 518 1008 521C1006 524 1006 527 1008 530C1011 534 1011 540 1007 545C1002 549 994 548 989 541C984 532 984 516 992 506Z" fill="#686868"/>
      <path d="M996 512C1000 516 1000 522 1002 526C1000 532 1000 538 998 542" stroke="#5a5a5a" stroke-width="3" fill="none" filter="url(#c1)"/>
      <path d="M1007 519l9 -3l2 8l-10 4z" fill="#5c5c5c"/>
      <ellipse cx="1097" cy="538" rx="16.500" ry="27" fill="url(#kid3)" transform="rotate(-8 1097 538)"/>
      <path d="M1088 528c4 4 2 10 6 14c-3 3-2 8-6 10" stroke="#484848" stroke-width="3" fill="none" filter="url(#c1)"/>
      <!-- aorta -->
      <ellipse cx="1057.500" cy="495.600" rx="7.500" ry="24.400" fill="#9e9e9e"/>
      <ellipse cx="1057.500" cy="516" rx="4" ry="3" fill="#c8c8c8" filter="url(#c1)"/>
      <!-- spine -->
      <g>
        <path d="M1035 535.600L1062 535.600C1060 541 1060 548 1062.500 553.500L1034.500 553.500C1037 548 1037 541 1035 535.600Z" fill="#6e6e6e" stroke="#9e9e9e" stroke-width="1"/>
        <path d="M1031.500 555.800L1063.500 555.800C1061 562 1061 570 1063 575.700L1032 575.700C1034.500 570 1034.500 562 1031.500 555.800Z" fill="#6e6e6e" stroke="#9e9e9e" stroke-width="1"/>
        <path d="M1037 526.600L1056 526.600L1057 534.400L1036 534.400Z" fill="#686868" stroke="#8c8c8c" stroke-width=".8"/>
        <path d="M1036 582C1040 580.500 1052 580.500 1057 582C1057.500 585 1055 587.500 1050 587.500L1041 587.500C1037 587.500 1035.500 585 1036 582Z" fill="#9c9c9c" stroke="#c8c8c8" stroke-width="1"/>
        <path d="M1033 554.600h31 M1031 576.800h33" stroke="#8a8a8a" stroke-width="1"/>
      </g>
      <!-- iliac bones -->
      <path d="M948.500 602C949 596 954 594.500 957 598C969 612 983 629 1000 645L995 645C979 632 963 618 951 606Z" fill="#8c8c8c"/>
      <path d="M949.500 602C960 612 976 630 996 645" stroke="#f2f2f2" stroke-width="1.700" fill="none"/>
      <path d="M956.500 597.500C969 612 984 630 1001 645" stroke="#d8d8d8" stroke-width="1.100" fill="none"/>
      <path d="M1136 593C1135 588 1130 587 1128 591C1117 608 1103 626 1086 645L1091 645C1107 630 1121 614 1134 598Z" fill="#8c8c8c"/>
      <path d="M1135.500 594C1124 612 1110 628 1092 645" stroke="#f2f2f2" stroke-width="1.700" fill="none"/>
      <path d="M1128.500 590.500C1117 608 1103 626 1085.500 645" stroke="#d8d8d8" stroke-width="1.100" fill="none"/>
      <!-- ribs in walls -->
      <g fill="none" stroke="#b4b4b4" stroke-width="1.200">
        <ellipse cx="959.500" cy="441" rx="1.700" ry="4" transform="rotate(12 959 441)"/>
        <ellipse cx="955.500" cy="469" rx="1.700" ry="4.500" transform="rotate(6 955 469)"/>
        <ellipse cx="958" cy="500" rx="1.700" ry="4.500" transform="rotate(-6 958 500)"/>
        <ellipse cx="960.500" cy="527" rx="1.500" ry="3.500"/>
        <ellipse cx="1135.500" cy="435" rx="1.700" ry="4" transform="rotate(-10 1135 435)"/>
        <ellipse cx="1139" cy="463" rx="1.700" ry="4" transform="rotate(-6 1139 463)"/>
        <ellipse cx="1138" cy="493" rx="1.600" ry="4.500" transform="rotate(6 1138 493)"/>
        <ellipse cx="1135" cy="525" rx="1.500" ry="4" transform="rotate(8 1135 525)"/>
      </g>
      <!-- calcifications / vessels -->
      <circle cx="996" cy="465" r="1.500" fill="#d8d8d8"/><circle cx="999.500" cy="468.500" r="1.700" fill="#cfcfcf"/><circle cx="1004" cy="470" r="1" fill="#aaa"/><circle cx="1009" cy="472" r=".9" fill="#999"/>
      <ellipse cx="1028.500" cy="600.500" rx="2.800" ry="2.200" fill="#9a9a9a"/><ellipse cx="1059.500" cy="600.500" rx="2.800" ry="2.200" fill="#9a9a9a"/>
      <path d="M1022 527l6 1" stroke="#8a8a8a" stroke-width="1.600"/>
      <path d="M1082 490l8 1.500" stroke="#9a9a9a" stroke-width="1.400"/>
      <!-- gas -->
      <g fill="#000">
        <ellipse cx="1015.300" cy="624" rx="2.800" ry="5.400"/><circle cx="1019" cy="633" r="2.600"/>
        <path d="M1040.500 599c2-2 4 0 4.500 3c1 5 3 9 5 13c1 3 2 6 0 8c-3 1-5-2-6-5c-1-5-2-9-3-13c-1-2-2-4-.5-6z"/>
        <ellipse cx="1059" cy="621" rx="2.600" ry="5.500" transform="rotate(-10 1059 621)"/><circle cx="1058" cy="616" r="2"/>
        <circle cx="1041" cy="621.500" r="1.600"/><circle cx="1045" cy="629" r="2.200"/><ellipse cx="1043" cy="641" rx="2.200" ry="3"/>
        <circle cx="972" cy="485" r="1.100"/><circle cx="980" cy="487" r="1.200"/>
        <circle cx="1121" cy="489.500" r="1.700"/><circle cx="1131" cy="492" r="1.200"/><ellipse cx="1129" cy="500" rx="2" ry="1.300"/>
      </g>
    </g>
    <g clip-path="url(#topStrip)"><path d="M960 421L960 460C964 446 970 436 978 430C984 425 990 422.500 996 421Z" fill="#000"/><path d="M1000 421C1010 424 1018 428 1022 434C1026 440 1030 446 1033 452L1033 421Z" fill="#000"/><path d="M1086 421C1092 430 1093 440 1088 448C1082 454 1074 456 1066 458L1066 476C1072 470 1080 466 1090 464.500C1100 462.500 1110 461 1118 462C1126 463 1131 467 1134.500 472L1134.500 421Z" fill="#000"/></g>
  </g>
  <g filter="url(#b3)">
    <rect x="978.500" y="495.100" width="41" height="62" fill="none" stroke="#bebebe" stroke-width="1.250"/>
    <circle cx="999" cy="495.200" r="2.900" fill="#a4e8dc"/>
    <circle cx="978.500" cy="525.700" r="3" fill="#8866dd"/>
    <circle cx="999" cy="525.700" r="3.100" fill="#f4c020"/>
    <circle cx="1019.200" cy="525.700" r="2.900" fill="#d4bce4"/>
    <circle cx="999" cy="557" r="2.900" fill="#2a7a9a"/>
  </g>
</svg>
<!-- ===== 3D VIEW ===== -->
<svg style="left:0;top:0" width="1280" height="720" viewBox="0 0 1280 720">
  <defs>
    <clipPath id="clip3"><rect x="809.600" y="86.600" width="471" height="290"/></clipPath>
    <clipPath id="kClip"><path id="kP" d="M1032.700 169.300C1038 166 1045 164.600 1051.600 164.800C1058 164.600 1064 165 1069 166.600C1075 169 1079 173 1080.800 179.500C1083 185 1084.200 191 1083.700 197C1083 204 1081 210 1077.800 214.500C1075 219.500 1071 223.500 1066.200 226.200C1060 229.500 1053 231 1047.200 233.500C1053 234 1059 236 1063.300 239.300C1068 243 1070.600 247.500 1072 252.400C1073.600 258 1074.200 264 1073.500 269.900C1072.600 276.500 1070 282.500 1066.200 287.400C1061.500 293 1055.500 296.500 1048.700 297.900C1042.500 298.800 1036.500 298 1031.200 296.100C1023.500 293 1016.500 288 1010.800 281.600C1005 275 1000.600 267 997.700 258.200C995.600 251.500 994.600 244.500 994.800 237.800C995 229.500 996.600 221.500 999.100 214.500C1001.400 206 1004.400 198 1007.900 191.200C1011 185.500 1015 180.500 1019.500 176.600C1023.500 173.300 1028 171 1032.700 169.300Z"/></clipPath>
    <linearGradient id="kBase" x1="0.800" y1="0" x2="0.200" y2="1"><stop offset="0" stop-color="#8a6668"/><stop offset=".3" stop-color="#b89458"/><stop offset=".55" stop-color="#d4aa54"/><stop offset="1" stop-color="#c8a04a"/></linearGradient>
    <radialGradient id="kHi" cx="38%" cy="62%" r="45%"><stop offset="0" stop-color="#f2d27c" stop-opacity=".95"/><stop offset=".6" stop-color="#e4bc60" stop-opacity=".45"/><stop offset="1" stop-color="#d0a850" stop-opacity="0"/></radialGradient>
    <filter id="kNoise" x="0" y="0" width="100%" height="100%">
      <feTurbulence type="fractalNoise" baseFrequency="0.2 0.1" numOctaves="3" seed="11" result="n"/>
      <feColorMatrix in="n" type="matrix" values="0 0 0 0 0.26  0 0 0 0 0.14  0 0 0 0 0.27  3.6 3.2 0 0 -3.050"/>
      <feGaussianBlur stdDeviation=".5"/>
    </filter>
    <filter id="kNoise2" x="0" y="0" width="100%" height="100%">
      <feTurbulence type="fractalNoise" baseFrequency="0.26 0.12" numOctaves="2" seed="23" result="n"/>
      <feColorMatrix in="n" type="matrix" values="0 0 0 0 0.97  0 0 0 0 0.84  0 0 0 0 0.48  3.2 0 3.2 0 -3.050"/>
      <feGaussianBlur stdDeviation=".5"/>
    </filter>
    <filter id="kNoise3" x="0" y="0" width="100%" height="100%">
      <feTurbulence type="fractalNoise" baseFrequency="0.3 0.14" numOctaves="2" seed="41" result="n"/>
      <feColorMatrix in="n" type="matrix" values="0 0 0 0 0.33  0 0 0 0 0.19  0 0 0 0 0.24  0 3.8 3.8 0 -3.800"/>
      <feGaussianBlur stdDeviation=".45"/>
    </filter>
    <linearGradient id="kMaskG" x1="0.900" y1="0" x2="0.250" y2="0.900"><stop offset="0" stop-color="#fff"/><stop offset=".35" stop-color="#ccc"/><stop offset=".6" stop-color="#444"/><stop offset="1" stop-color="#111"/></linearGradient>
    <mask id="kMask"><rect x="990" y="160" width="100" height="145" fill="url(#kMaskG)"/></mask>
  </defs>
  <g clip-path="url(#clip3)">
    <!-- magenta box -->
    <g stroke="#d64cd8" stroke-width="1.350" fill="none" filter="url(#b5)" opacity=".92">
      <path d="M970.500 80L978.900 134.200"/>
      <path d="M985 80L998.900 190.600"/>
      <path d="M977.100 134.200L1280 94.800"/>
      <path d="M998.900 190.600L1195.500 165.600"/>
      <path d="M1180 80L1195.500 165.600"/>
      <path d="M1195.500 165.600L1282 92.500"/>
    </g>
    <!-- white ROI box -->
    <g stroke="#f8f8fc" stroke-width="1.350" fill="none" filter="url(#b3)">
      <path d="M976.400 154.800L1086 141L1111.400 308.400L999.100 325.900Z"/>
      <path d="M991 181.900L1007.300 316.500L1098.200 304.300L1078 166.500"/>
      <path d="M991 181.900L1008 179.600"/>
      <path d="M976.400 154.800L991 181.900 M999.100 325.900L1007.300 316.500 M1111.400 308.400L1098.200 304.300 M1086 141L1078 166.500"/>
      <path d="M1042.300 231L1092.400 232 M1051.600 298L1053 314 M1032 166L1032.700 170" stroke-width="1"/>
    </g>
    <!-- ureter / vessels -->
    <g fill="none" stroke-linecap="round" filter="url(#b3)">
      <path d="M1082.200 143C1079.500 148 1079 154 1080 160C1081 166 1083 172 1085 178" stroke="#6a5434" stroke-width="3.800"/>
      <path d="M1082.200 143C1079.500 148 1079 154 1080 160C1081 166 1083 172 1085 178" stroke="#bc9e54" stroke-width="2.600"/>
      <path d="M1082.800 144C1080.800 150 1081 156 1082 162" stroke="#e8d088" stroke-width="1"/>
      <path d="M1086.500 186l.8 6 M1088 198l.6 5 M1089 210l.4 6" stroke="#a08858" stroke-width="1.200" opacity=".75"/>
      <path d="M1066 245C1072 243 1078 240 1082 236.500C1086 233.500 1090 232 1093 229.500" stroke="#b89a54" stroke-width="2.400"/>
      <path d="M1074 222C1079 224 1084 225 1087 228.500C1090 231 1092 229 1094 226" stroke="#b89a54" stroke-width="2"/>
      <path d="M1092 226l1.500-5" stroke="#b89a54" stroke-width="1.500"/>
      <path d="M1073 274l1.200 7 M1075 286l1 7 M1076.600 298l1.200 8 M1078.400 310l.8 5" stroke="#b49a68" stroke-width="1.300" opacity=".8"/>
    </g>
    <!-- kidney -->
    <g filter="url(#b5)">
      <use href="#kP" fill="url(#kBase)"/>
      <g clip-path="url(#kClip)">
        <rect x="990" y="160" width="100" height="145" fill="url(#kHi)"/>
        <!-- purple upper lobe -->
        <path d="M1012 176C1024 166 1050 160 1072 166C1086 176 1088 200 1078 216C1070 228 1058 232 1048 232C1052 222 1054 212 1050 204C1040 198 1024 200 1010 208C1002 214 996 226 992 240L990 200Z" fill="#4c2e4a" opacity=".66" filter="url(#c3)"/>
        <g transform="rotate(-55 1040 232)"><rect x="960" y="150" width="160" height="165" filter="url(#kNoise2)" opacity=".75"/></g>
        <g transform="rotate(-55 1040 232)"><rect x="960" y="150" width="160" height="165" filter="url(#kNoise3)" opacity=".9"/></g>
        <g mask="url(#kMask)"><g transform="rotate(-50 1040 232)"><rect x="960" y="150" width="160" height="165" filter="url(#kNoise)"/></g></g>
        <!-- hilum crease -->
        <path d="M1076 214C1070 222 1060 228 1046 232.500C1054 235 1060 238 1064 241" stroke="#3a2632" stroke-width="2.400" fill="none" filter="url(#c1)" opacity=".85"/>
        <path d="M1047 232C1052 222 1056 210 1062 200C1066 194 1070 190 1074 186" stroke="#4a3444" stroke-width="1.800" fill="none" filter="url(#c2)" opacity=".55"/>
        <!-- edge shading -->
        <use href="#kP" fill="none" stroke="#38262e" stroke-width="5.500" filter="url(#c2)" opacity=".8"/>
      </g>
      <use href="#kP" fill="none" stroke="#4a3840" stroke-width=".8" opacity=".6"/>
    </g>
    <!-- handles -->
    <g filter="url(#b3)">
      <circle cx="1032.400" cy="165.600" r="2.800" fill="#8ad4d4" stroke="#5aa0a8" stroke-width=".6"/>
      <circle cx="1042.600" cy="231" r="3.100" fill="#e88820" stroke="#b86010" stroke-width=".6"/>
      <circle cx="993.400" cy="245.600" r="2.800" fill="#9060c8"/>
      <circle cx="1052.900" cy="314.700" r="2.900" fill="#186878" stroke="#0c4858" stroke-width=".6"/>
    </g>
    <!-- cursor -->
    <path d="M984.200 244.200L984.200 256.600L987.200 253.800L989.400 258.600L991 257.800L988.800 253.200L992.600 253Z" fill="#fff" stroke="#888" stroke-width=".6" filter="url(#b3)"/>
    <!-- axis labels -->
    <g fill="#f4f4f8" font-family="Liberation Sans" font-size="15" filter="url(#b3)">
      <text x="1079.200" y="94.300" font-size="14.500">P</text>
    </g>
    <rect x="1110.600" y="164.400" width="1.700" height="12.200" fill="#f4f4f8" filter="url(#b3)"/>
  </g>
</svg>
<div id="edge2" style="position:absolute;left:0;top:15px;width:1.400px;height:688.500px;background:#55565c"></div><div style="position:absolute;left:1278px;top:15px;width:2px;height:688.500px;background:linear-gradient(90deg,rgba(70,70,80,.25),rgba(60,60,68,.95))"></div><div style="position:absolute;left:2px;top:702.500px;width:1276px;height:1px;background:#dde8f0"></div>
</body></html>
